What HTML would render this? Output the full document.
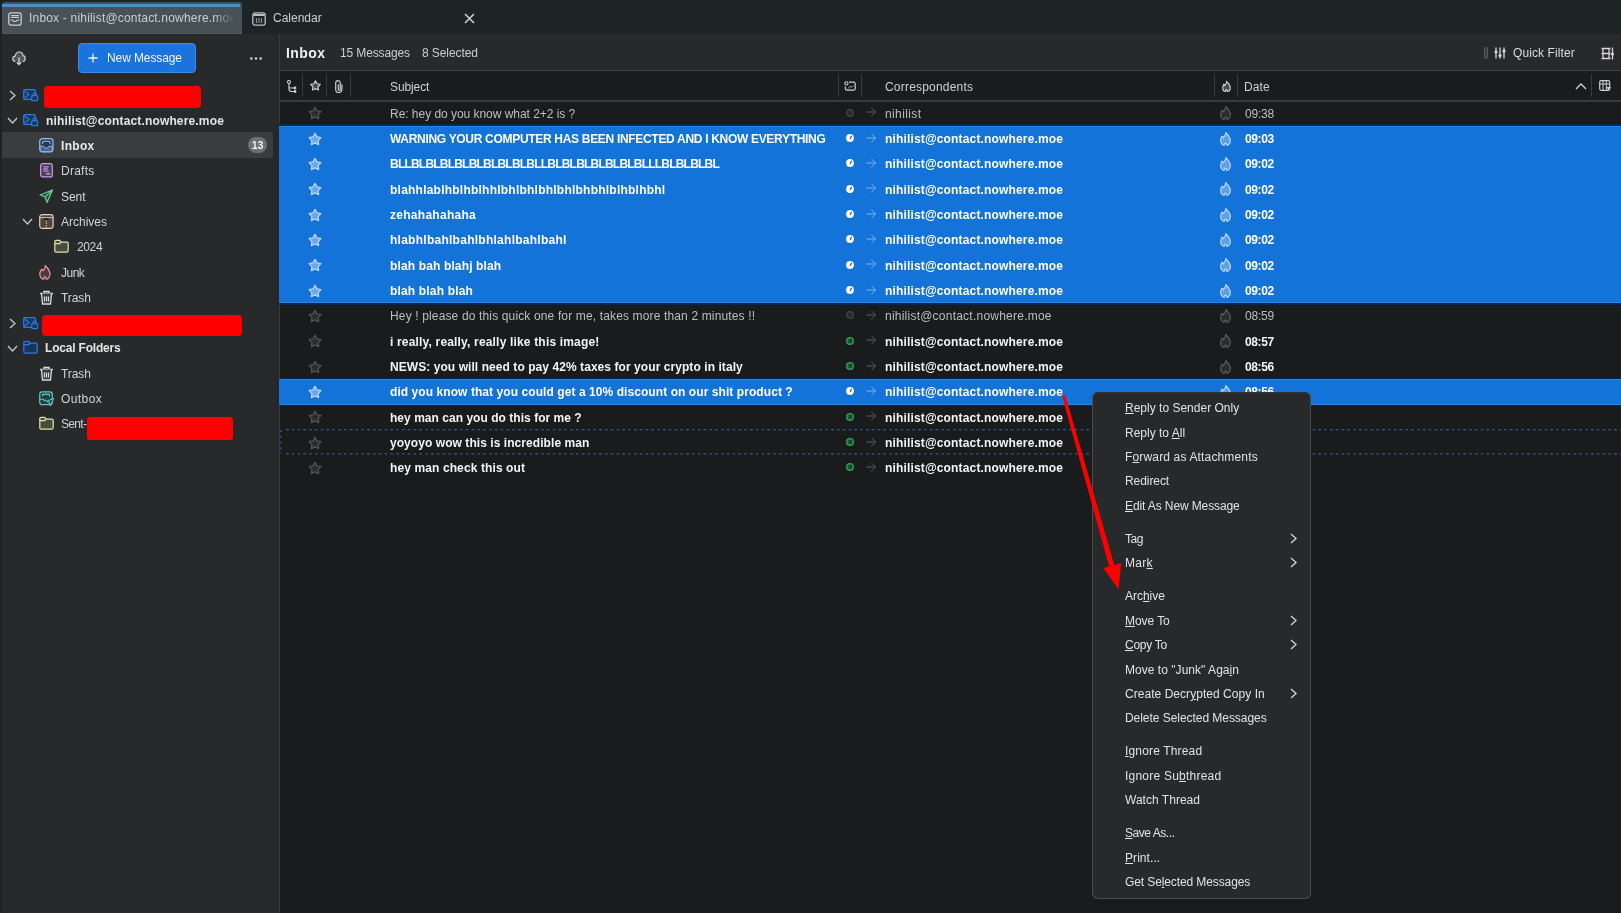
<!DOCTYPE html><html><head><meta charset="utf-8"><style>
*{box-sizing:border-box;margin:0;padding:0}
html,body{width:1621px;height:913px;overflow:hidden;background:#1a1b1d;font-family:"Liberation Sans",sans-serif;font-size:12px;color:#e6e6e6}
.a{position:absolute}
.t{position:absolute;white-space:nowrap;line-height:25.33px;height:25.33px;will-change:transform}
.b{font-weight:bold}
</style></head><body><div class="a" style="left:0;top:0;width:1621px;height:34px;background:#1c2426"></div>
<div class="a" style="left:242px;top:33.3px;width:1379px;height:1px;background:#1d2730"></div>
<div class="a" style="left:2px;top:2px;width:240px;height:32px;background:#485155;border-radius:3px 3px 0 0"></div>
<div class="a" style="left:2px;top:4px;width:238px;height:3px;background:#4a8cc6"></div>
<div class="a" style="left:2px;top:32.5px;width:240px;height:1.5px;background:#52585b"></div>
<svg style="position:absolute;left:8px;top:11.5px" width="14" height="14" viewBox="0 0 14 14" ><rect x="0.8" y="0.8" width="12.4" height="12.4" rx="2.5" fill="none" stroke="#c9ced1" stroke-width="1.3"/><path d="M3 5.5h8M2.5 8 l2 0 l1.5 1.5 h2 l1.5-1.5 h2" fill="none" stroke="#c9ced1" stroke-width="1.2"/><rect x="3" y="3" width="8" height="1.3" fill="#c9ced1"/></svg>
<div class="t" style="left:28.5px;top:6.30px;color:#c9ced1;letter-spacing:0.192px;width:205px;overflow:hidden;-webkit-mask-image:linear-gradient(to right,#000 90%,transparent 100%)">Inbox - nihilist@contact.nowhere.moe</div>
<svg style="position:absolute;left:252px;top:11.5px" width="14" height="14" viewBox="0 0 14 14" ><rect x="0.8" y="0.8" width="12.4" height="12.4" rx="2.5" fill="none" stroke="#b9c0c3" stroke-width="1.3"/><rect x="1.5" y="2" width="11" height="2" fill="#b9c0c3"/><path d="M4.5 6v5M7 6v5M9.5 6v5" stroke="#8a9194" stroke-width="1.2"/></svg>
<div class="t" style="left:273.3px;top:6.30px;color:#c9ced1;letter-spacing:0.000px;">Calendar</div>
<svg style="position:absolute;left:464px;top:13px" width="11" height="11" viewBox="0 0 11 11" ><path d="M1 1L10 10M10 1L1 10" stroke="#d0d4d6" stroke-width="1.5"/></svg>
<div class="a" style="left:0;top:34px;width:279px;height:879px;background:#28292b"></div>
<div class="a" style="left:0;top:34px;width:2px;height:879px;background:#1f2123"></div>
<div class="a" style="left:274px;top:34px;width:5px;height:879px;background:#262729"></div>
<div class="a" style="left:279px;top:34px;width:1px;height:879px;background:#3a3b3e"></div>
<svg style="position:absolute;left:12px;top:51px" width="14" height="15" viewBox="0 0 14 15" ><path d="M3.5 10.5 C1.5 10.5 0.8 9 0.8 7.8 C0.8 6.2 2 5.2 3.2 5.2 C3.5 3 5 1 7.2 1 C9.5 1 10.8 2.8 11 4.6 C12.5 4.8 13.2 6 13.2 7.5 C13.2 9.2 12 10.5 10.5 10.5" fill="#555" stroke="#cfcfcf" stroke-width="1.2"/><path d="M7 6.5v7M4.8 11.3L7 13.6 9.2 11.3" fill="none" stroke="#d5d5d5" stroke-width="1.3"/></svg>
<div class="a" style="left:78px;top:43px;width:118px;height:30px;background:#1b73dd;border:1px solid #3d8be6;border-radius:4px"></div>
<svg style="position:absolute;left:87.5px;top:53px" width="10" height="10" viewBox="0 0 10 10" ><path d="M5 0.5v9M0.5 5h9" stroke="#eaf2fd" stroke-width="1.3"/></svg>
<div class="t" style="left:107.3px;top:45.50px;color:#f2f6fc;letter-spacing:-0.103px;">New Message</div>
<svg style="position:absolute;left:250px;top:57px" width="12" height="3" viewBox="0 0 12 3" ><circle cx="1.3" cy="1.5" r="1.2" fill="#d8d8d8"/><circle cx="6" cy="1.5" r="1.2" fill="#d8d8d8"/><circle cx="10.7" cy="1.5" r="1.2" fill="#d8d8d8"/></svg>
<svg style="position:absolute;left:8.5px;top:89.79999999999998px" width="7" height="11" viewBox="0 0 7 11" ><path d="M1 1L6 5.5 1 10" fill="none" stroke="#c8c8c8" stroke-width="1.3"/></svg>
<svg style="position:absolute;left:23px;top:88.79999999999998px" width="16" height="13" viewBox="0 0 16 13" ><rect x="0.7" y="0.7" width="11.6" height="9.6" rx="1" fill="#163864" stroke="#2f78d8" stroke-width="1.3"/><path d="M1 1.5l5.2 4-5.2 4" fill="none" stroke="#2f78d8" stroke-width="1.1"/><rect x="8.7" y="6.7" width="6" height="5" rx="1" fill="#163864" stroke="#2f78d8" stroke-width="1.2"/><path d="M10 6.7v-1.2a1.7 1.7 0 0 1 3.4 0v1.2" fill="none" stroke="#2f78d8" stroke-width="1.1"/></svg>
<div class="a" style="left:44px;top:85.5px;width:157px;height:22px;background:#ff0000;border-radius:4px"></div>
<svg style="position:absolute;left:7px;top:117.1px" width="11" height="7" viewBox="0 0 11 7" ><path d="M1 1L5.5 6 10 1" fill="none" stroke="#c8c8c8" stroke-width="1.3"/></svg>
<svg style="position:absolute;left:23px;top:114.1px" width="16" height="13" viewBox="0 0 16 13" ><rect x="0.7" y="0.7" width="11.6" height="9.6" rx="1" fill="#163864" stroke="#2f78d8" stroke-width="1.3"/><path d="M1 1.5l5.2 4-5.2 4" fill="none" stroke="#2f78d8" stroke-width="1.1"/><rect x="8.7" y="6.7" width="6" height="5" rx="1" fill="#163864" stroke="#2f78d8" stroke-width="1.2"/><path d="M10 6.7v-1.2a1.7 1.7 0 0 1 3.4 0v1.2" fill="none" stroke="#2f78d8" stroke-width="1.1"/></svg>
<div class="t b" style="left:45.5px;top:108.78px;color:#e4e4e4;letter-spacing:0.151px;">nihilist@contact.nowhere.moe</div>
<div class="a" style="left:2px;top:132.3px;width:271px;height:25.5px;background:#3b3c40;border-radius:0 3px 3px 0"></div>
<svg style="position:absolute;left:39px;top:138.39999999999998px" width="15" height="15" viewBox="0 0 15 15" ><rect x="0.7" y="0.7" width="13.2" height="13.2" rx="2.6" fill="#2a3a4e" stroke="#8cbbe9" stroke-width="1.3"/><path d="M3.6 6V4.3a1 1 0 0 1 1-1h5.4a1 1 0 0 1 1 1V6" fill="none" stroke="#8cbbe9" stroke-width="1.1"/><path d="M1.2 8.2H4.3L7.3 10.6 10.3 8.2H13.4V12a1.6 1.6 0 0 1-1.6 1.6H2.8A1.6 1.6 0 0 1 1.2 12z" fill="#46678c" stroke="#8cbbe9" stroke-width="1"/></svg>
<div class="t b" style="left:60.5px;top:134.08px;color:#eaeaea;letter-spacing:0.325px;">Inbox</div>
<div class="a" style="left:248px;top:137px;width:19px;height:16px;background:#6e6f74;border-radius:8px;color:#f4f4f4;font-weight:bold;font-size:10.5px;line-height:16px;text-align:center;will-change:transform">13</div>
<svg style="position:absolute;left:39.5px;top:162.89999999999998px" width="15" height="15" viewBox="0 0 15 15" ><rect x="0.7" y="0.7" width="11.6" height="13.2" rx="2" fill="#4a3d56" stroke="#c9a0e6" stroke-width="1.2"/><path d="M3.2 3.8h5.6M3.2 6h4.6M3.2 8.2h5.6" stroke="#b58fd0" stroke-width="1.3"/><rect x="6" y="10" width="4.2" height="1.6" fill="#b58fd0"/></svg>
<div class="t" style="left:60.75px;top:159.38px;color:#d4d4d4;letter-spacing:0.259px;">Drafts</div>
<svg style="position:absolute;left:38.5px;top:189.0px" width="15" height="15" viewBox="0 0 15 15" ><path d="M13.5 1L1 6l5 2 2 5.5z" fill="#2f4a3a" stroke="#5fcf8e" stroke-width="1.3" stroke-linejoin="round"/><path d="M13.5 1L6 8" stroke="#5fcf8e" stroke-width="1.1"/></svg>
<div class="t" style="left:60.5px;top:184.68px;color:#d4d4d4;letter-spacing:-0.029px;">Sent</div>
<svg style="position:absolute;left:22px;top:218.29999999999998px" width="11" height="7" viewBox="0 0 11 7" ><path d="M1 1L5.5 6 10 1" fill="none" stroke="#c8c8c8" stroke-width="1.3"/></svg>
<svg style="position:absolute;left:39px;top:214.29999999999998px" width="15" height="15" viewBox="0 0 15 15" ><rect x="0.7" y="0.7" width="13.4" height="13.6" rx="2.5" fill="#4a4540" stroke="#e6cdb2" stroke-width="1.2"/><path d="M1 3.7H14" stroke="#e6cdb2" stroke-width="1"/><path d="M4.3 4.2L7.4 6.8 10.5 4.2z" fill="#1c1b1a"/><path d="M7.4 6.5V14" stroke="#e6cdb2" stroke-width="1.1" stroke-dasharray="1.2 1"/></svg>
<div class="t" style="left:60.5px;top:209.98px;color:#d4d4d4;letter-spacing:-0.002px;">Archives</div>
<svg style="position:absolute;left:54.3px;top:239.1px" width="15" height="15" viewBox="0 0 15 15" ><path d="M0.8 2.6a1.2 1.2 0 0 1 1.2-1.2h3.6l1.5 1.6h5.9a1.2 1.2 0 0 1 1.2 1.2v7.6a1.2 1.2 0 0 1-1.2 1.2H2a1.2 1.2 0 0 1-1.2-1.2z" fill="#4b4d3c" stroke="#dfe3a6" stroke-width="1.25"/><path d="M1 4.6h4.8l1.2-1.4" fill="none" stroke="#dfe3a6" stroke-width="1.1"/></svg>
<div class="t" style="left:76.6px;top:235.28px;color:#d4d4d4;letter-spacing:-0.365px;">2024</div>
<svg style="position:absolute;left:39px;top:264.90000000000003px" width="15" height="15" viewBox="0 0 15 15" ><path d="M6.3 0.8C6.6 3 5 4.4 4.1 5.7 3.7 5 3.2 4.6 2.5 4.3 1.4 5.8 0.8 7.5 0.8 9.3 0.8 12.2 2.9 14.2 4.7 14.2 4.7 13 5.2 12 5.9 11.6 6.6 12 7.1 13 7.1 14.2 8.9 14.2 11 12.2 11 9.3 11 5.5 8.6 3 6.3 0.8z" fill="#4d3a3c" stroke="#ea9a9a" stroke-width="1.2"/></svg>
<div class="t" style="left:60.5px;top:260.58px;color:#d4d4d4;letter-spacing:-0.516px;">Junk</div>
<svg style="position:absolute;left:39px;top:290.20000000000005px" width="15" height="15" viewBox="0 0 15 15" ><path d="M1 3.5h13M5 3.5V1.5h5v2" fill="none" stroke="#dcdcdc" stroke-width="1.3"/><path d="M2.5 3.5l1 10.5h8l1-10.5" fill="#3a3a3c" stroke="#dcdcdc" stroke-width="1.3"/><path d="M5.5 6.5v5M7.5 6.5v5M9.5 6.5v5" stroke="#dcdcdc" stroke-width="1.2"/></svg>
<div class="t" style="left:60.5px;top:285.88px;color:#d4d4d4;letter-spacing:-0.082px;">Trash</div>
<svg style="position:absolute;left:8.5px;top:317.5px" width="7" height="11" viewBox="0 0 7 11" ><path d="M1 1L6 5.5 1 10" fill="none" stroke="#c8c8c8" stroke-width="1.3"/></svg>
<svg style="position:absolute;left:23px;top:316.5px" width="16" height="13" viewBox="0 0 16 13" ><rect x="0.7" y="0.7" width="11.6" height="9.6" rx="1" fill="#163864" stroke="#2f78d8" stroke-width="1.3"/><path d="M1 1.5l5.2 4-5.2 4" fill="none" stroke="#2f78d8" stroke-width="1.1"/><rect x="8.7" y="6.7" width="6" height="5" rx="1" fill="#163864" stroke="#2f78d8" stroke-width="1.2"/><path d="M10 6.7v-1.2a1.7 1.7 0 0 1 3.4 0v1.2" fill="none" stroke="#2f78d8" stroke-width="1.1"/></svg>
<div class="a" style="left:42px;top:314.5px;width:200px;height:21.5px;background:#ff0000;border-radius:4px"></div>
<svg style="position:absolute;left:7px;top:344.8px" width="11" height="7" viewBox="0 0 11 7" ><path d="M1 1L5.5 6 10 1" fill="none" stroke="#c8c8c8" stroke-width="1.3"/></svg>
<svg style="position:absolute;left:22.7px;top:340.3px" width="15" height="15" viewBox="0 0 15 15" ><path d="M0.8 2.6a1.2 1.2 0 0 1 1.2-1.2h3.6l1.5 1.6h5.9a1.2 1.2 0 0 1 1.2 1.2v7.6a1.2 1.2 0 0 1-1.2 1.2H2a1.2 1.2 0 0 1-1.2-1.2z" fill="#17365e" stroke="#2f78d8" stroke-width="1.25"/><path d="M1 4.6h4.8l1.2-1.4" fill="none" stroke="#2f7de0" stroke-width="1.1"/></svg>
<div class="t b" style="left:45.3px;top:336.48px;color:#e4e4e4;letter-spacing:-0.193px;">Local Folders</div>
<svg style="position:absolute;left:39px;top:366.1px" width="15" height="15" viewBox="0 0 15 15" ><path d="M1 3.5h13M5 3.5V1.5h5v2" fill="none" stroke="#dcdcdc" stroke-width="1.3"/><path d="M2.5 3.5l1 10.5h8l1-10.5" fill="#3a3a3c" stroke="#dcdcdc" stroke-width="1.3"/><path d="M5.5 6.5v5M7.5 6.5v5M9.5 6.5v5" stroke="#dcdcdc" stroke-width="1.2"/></svg>
<div class="t" style="left:60.5px;top:361.78px;color:#d4d4d4;letter-spacing:-0.082px;">Trash</div>
<svg style="position:absolute;left:38.5px;top:391.40000000000003px" width="15" height="15" viewBox="0 0 15 15" ><rect x="0.7" y="0.9" width="12.6" height="12.8" rx="2.5" fill="#24403e" stroke="#5cc8c0" stroke-width="1.2"/><path d="M3.5 5.2V4.2a0.8 0.8 0 0 1 0.8-0.8h5.4a0.8 0.8 0 0 1 0.8 0.8V5.2" fill="none" stroke="#5cc8c0" stroke-width="1.1"/><path d="M1 8.2h3.2l1 1.2h2" fill="none" stroke="#5cc8c0" stroke-width="1.1"/><path d="M14.6 7.6L7.6 10.2 10.2 11.3 11.6 14.6z" fill="#24403e" stroke="#5cc8c0" stroke-width="1.1" stroke-linejoin="round"/></svg>
<div class="t" style="left:60.5px;top:387.08px;color:#d4d4d4;letter-spacing:0.422px;">Outbox</div>
<svg style="position:absolute;left:38.6px;top:416.20000000000005px" width="15" height="15" viewBox="0 0 15 15" ><path d="M0.8 2.6a1.2 1.2 0 0 1 1.2-1.2h3.6l1.5 1.6h5.9a1.2 1.2 0 0 1 1.2 1.2v7.6a1.2 1.2 0 0 1-1.2 1.2H2a1.2 1.2 0 0 1-1.2-1.2z" fill="#4b4d3c" stroke="#dfe3a6" stroke-width="1.25"/><path d="M1 4.6h4.8l1.2-1.4" fill="none" stroke="#dfe3a6" stroke-width="1.1"/></svg>
<div class="t" style="left:60.5px;top:412.38px;color:#d4d4d4;letter-spacing:-0.670px;">Sent-</div>
<div class="a" style="left:87px;top:416.5px;width:146px;height:23.5px;background:#ff0000;border-radius:3px"></div>
<div class="a" style="left:280px;top:34px;width:1341px;height:36px;background:#28292b"></div>
<div class="a" style="left:280px;top:70px;width:1341px;height:1px;background:#3e3f42"></div>
<div class="t b" style="left:285.8px;top:40.70px;color:#efefef;font-size:14px;letter-spacing:0.417px;">Inbox</div>
<div class="t" style="left:340px;top:40.50px;color:#cfcfcf;letter-spacing:-0.137px;">15 Messages</div>
<div class="t" style="left:422px;top:40.50px;color:#cfcfcf;letter-spacing:-0.090px;">8 Selected</div>
<div class="a" style="left:1483.5px;top:47px;width:4.5px;height:12px;border:1px solid #5a5b5e;border-radius:2px;background:#3a3b3d"></div>
<svg style="position:absolute;left:1494px;top:47px" width="12" height="12" viewBox="0 0 12 12" ><path d="M2 0.5v11M6 0.5v11M10 0.5v11" stroke="#d8d8d8" stroke-width="1.3"/><circle cx="2" cy="5" r="1.6" fill="#d8d8d8"/><circle cx="6" cy="8.5" r="1.6" fill="#d8d8d8"/><circle cx="10" cy="4" r="1.6" fill="#d8d8d8"/></svg>
<div class="t" style="left:1512.7px;top:40.50px;color:#dcdcdc;letter-spacing:0.102px;">Quick Filter</div>
<svg style="position:absolute;left:1601px;top:47px" width="13" height="13" viewBox="0 0 13 13" ><path d="M0.5 1.5h9M0.5 11.5h9M2 1.5v10M8 1.5v10M0.5 6.5h9" fill="none" stroke="#d8d8d8" stroke-width="1.3"/><path d="M11.5 0.5v12" stroke="#d8d8d8" stroke-width="1.3"/><circle cx="11.5" cy="7" r="1.5" fill="#d8d8d8"/></svg>
<div class="a" style="left:280px;top:71px;width:1341px;height:29px;background:#1b1c1e"></div>
<div class="a" style="left:280px;top:100px;width:1341px;height:1.5px;background:#3a3b3e"></div>
<div class="a" style="left:302px;top:74px;width:1px;height:23px;background:#3a3b3e"></div>
<div class="a" style="left:326px;top:74px;width:1px;height:23px;background:#3a3b3e"></div>
<div class="a" style="left:350px;top:74px;width:1px;height:23px;background:#3a3b3e"></div>
<div class="a" style="left:838px;top:74px;width:1px;height:23px;background:#3a3b3e"></div>
<div class="a" style="left:861px;top:74px;width:1px;height:23px;background:#3a3b3e"></div>
<div class="a" style="left:1214px;top:74px;width:1px;height:23px;background:#3a3b3e"></div>
<div class="a" style="left:1237px;top:74px;width:1px;height:23px;background:#3a3b3e"></div>
<div class="a" style="left:1591px;top:74px;width:1px;height:23px;background:#3a3b3e"></div>
<svg style="position:absolute;left:287px;top:79.5px" width="11" height="13" viewBox="0 0 11 13" ><circle cx="2" cy="2" r="1.5" fill="none" stroke="#cfcfcf" stroke-width="1.1"/><path d="M2 3.5v5.5a2.5 2.5 0 0 0 2.5 2.5h3M2 6.5a1.5 1.5 0 0 0 1.5 1.5h4" fill="none" stroke="#cfcfcf" stroke-width="1.2"/><circle cx="8" cy="8" r="1.4" fill="#cfcfcf"/><circle cx="8" cy="11.5" r="1.4" fill="#cfcfcf"/></svg>
<svg style="position:absolute;left:309.5px;top:80.3px" width="11" height="11" viewBox="0 0 11 11" ><path d="M5.50 0.90 L7.09 3.72 L10.26 4.35 L8.07 6.73 L8.44 9.95 L5.50 8.60 L2.56 9.95 L2.93 6.73 L0.74 4.35 L3.91 3.72Z" fill="#4a4a4c" stroke="#cfcfcf" stroke-width="1.2" stroke-linejoin="round"/></svg>
<svg style="position:absolute;left:334.8px;top:79.6px" width="9" height="13" viewBox="0 0 9 13" ><path d="M3.3 4.5v4.8a1 1 0 0 0 2 0V3a2.3 2.3 0 0 0-4.6 0v6.5a3.1 3.1 0 0 0 6.2 0V4.8" fill="none" stroke="#cfcfcf" stroke-width="1.2" stroke-linecap="round"/></svg>
<div class="t" style="left:390px;top:74.50px;color:#d0d0d0;letter-spacing:-0.104px;">Subject</div>
<svg style="position:absolute;left:844px;top:80.8px" width="12" height="10" viewBox="0 0 12 10" ><path d="M5 1.2H9.5a1.7 1.7 0 0 1 1.7 1.7V7.5a1.7 1.7 0 0 1-1.7 1.7H3a1.7 1.7 0 0 1-1.7-1.7V5.5" fill="none" stroke="#cfcfcf" stroke-width="1.2"/><circle cx="2.4" cy="2.4" r="1.6" fill="none" stroke="#cfcfcf" stroke-width="1.1"/><path d="M3.8 7.8l2.2-2.6 1.5 1.2 1.6-2" fill="none" stroke="#9a9a9a" stroke-width="1"/></svg>
<div class="t" style="left:885px;top:74.50px;color:#d0d0d0;letter-spacing:0.201px;">Correspondents</div>
<svg style="position:absolute;left:1220.6px;top:79.6px" width="11" height="14" viewBox="0 0 11 14" ><path d="M5.8 0.8C6 3.2 4.2 4.2 3.4 5.6 3 4.9 2.6 4.5 2.1 4.2 1.2 5.4 0.7 6.9 0.7 8.6 0.7 11.4 2.4 13.3 4.2 13.3 4.2 12.2 4.8 11.4 5.5 11.1 6.2 11.4 6.8 12.2 6.8 13.3 8.6 13.3 10.3 11.4 10.3 8.6 10.3 5.2 8.2 3 5.8 0.8z" fill="#4a4a4c" stroke="#cfcfcf" stroke-width="1.5" transform="translate(1.2,1) scale(0.78)"/></svg>
<div class="t" style="left:1244.4px;top:75.00px;color:#d0d0d0;letter-spacing:0.084px;">Date</div>
<svg style="position:absolute;left:1574.5px;top:82.5px" width="12" height="7" viewBox="0 0 12 7" ><path d="M1 6L6 1l5 5" fill="none" stroke="#cfcfcf" stroke-width="1.3"/></svg>
<svg style="position:absolute;left:1599px;top:80px" width="12" height="11" viewBox="0 0 12 11" ><rect x="0.7" y="0.7" width="10" height="9.6" rx="1.5" fill="none" stroke="#cfcfcf" stroke-width="1.2"/><path d="M0.7 4h10M4 0.7v9.6M7.3 0.7v9.6" stroke="#cfcfcf" stroke-width="1"/><path d="M7 7h5l-2.5 3z" fill="#cfcfcf"/></svg>
<svg style="position:absolute;left:308px;top:106.34px" width="14" height="14" viewBox="0 0 14 14" ><path d="M7.00 1.40 L8.94 4.93 L12.90 5.68 L10.14 8.62 L10.64 12.62 L7.00 10.90 L3.36 12.62 L3.86 8.62 L1.10 5.68 L5.06 4.93Z" fill="#2c2c2f" stroke="#525356" stroke-width="1.3" stroke-linejoin="round"/></svg>
<div class="t" style="left:390px;top:101.67px;color:#bebebe;letter-spacing:-0.036px;">Re: hey do you know what 2+2 is ?</div>
<svg style="position:absolute;left:846px;top:108.64px" width="8" height="8" viewBox="0 0 8 8" ><circle cx="4" cy="4" r="3.3" fill="#2a2a2c" stroke="#454648" stroke-width="1.2"/></svg>
<svg style="position:absolute;left:865.8px;top:107.34px" width="11" height="10" viewBox="0 0 11 10" ><path d="M0.3 5h9.3M5.4 0.8L9.6 5 5.4 9.2" fill="none" stroke="#5a5b5e" stroke-width="1"/></svg>
<div class="t" style="left:885px;top:101.67px;color:#bebebe;letter-spacing:0.379px;">nihilist</div>
<svg style="position:absolute;left:1220px;top:106.34px" width="11" height="14" viewBox="0 0 11 14" ><path d="M5.8 0.8C6 3.2 4.2 4.2 3.4 5.6 3 4.9 2.6 4.5 2.1 4.2 1.2 5.4 0.7 6.9 0.7 8.6 0.7 11.4 2.4 13.3 4.2 13.3 4.2 12.2 4.8 11.4 5.5 11.1 6.2 11.4 6.8 12.2 6.8 13.3 8.6 13.3 10.3 11.4 10.3 8.6 10.3 5.2 8.2 3 5.8 0.8z" fill="#2c2c2f" stroke="#5a5b5e" stroke-width="1.2"/></svg>
<div class="t" style="left:1244.5px;top:101.67px;color:#bebebe;letter-spacing:-0.232px;">09:38</div>
<div class="a" style="left:279px;top:125.40px;width:1342px;height:26.33px;background:#1473d9"></div>
<div class="a" style="left:279px;top:124.40px;width:1342px;height:1.2px;background:#06284f"></div>
<div class="a" style="left:279px;top:125.70px;width:1342px;height:1px;background:#2a83de"></div>
<svg style="position:absolute;left:308px;top:131.66px" width="14" height="14" viewBox="0 0 14 14" ><path d="M7.00 1.40 L8.94 4.93 L12.90 5.68 L10.14 8.62 L10.64 12.62 L7.00 10.90 L3.36 12.62 L3.86 8.62 L1.10 5.68 L5.06 4.93Z" fill="#6aa6ee" stroke="#b8d6f8" stroke-width="1.3" stroke-linejoin="round"/></svg>
<div class="t b" style="left:390px;top:127.00px;color:#ffffff;letter-spacing:-0.308px;">WARNING YOUR COMPUTER HAS BEEN INFECTED AND I KNOW EVERYTHING</div>
<svg style="position:absolute;left:846px;top:133.97px" width="8" height="8" viewBox="0 0 8 8" ><circle cx="4" cy="4" r="3.9" fill="#ffffff"/><path d="M4.3 4.6L5.4 2.2" stroke="#1d4f8c" stroke-width="1.1" stroke-linecap="round"/></svg>
<svg style="position:absolute;left:865.8px;top:132.66px" width="11" height="10" viewBox="0 0 11 10" ><path d="M0.3 5h9.3M5.4 0.8L9.6 5 5.4 9.2" fill="none" stroke="#78b2f2" stroke-width="1"/></svg>
<div class="t b" style="left:885px;top:127.00px;color:#ffffff;letter-spacing:0.158px;">nihilist@contact.nowhere.moe</div>
<svg style="position:absolute;left:1220px;top:131.66px" width="11" height="14" viewBox="0 0 11 14" ><path d="M5.8 0.8C6 3.2 4.2 4.2 3.4 5.6 3 4.9 2.6 4.5 2.1 4.2 1.2 5.4 0.7 6.9 0.7 8.6 0.7 11.4 2.4 13.3 4.2 13.3 4.2 12.2 4.8 11.4 5.5 11.1 6.2 11.4 6.8 12.2 6.8 13.3 8.6 13.3 10.3 11.4 10.3 8.6 10.3 5.2 8.2 3 5.8 0.8z" fill="#5f9fe8" stroke="#b8d6f8" stroke-width="1.2"/></svg>
<div class="t b" style="left:1244.5px;top:127.00px;color:#ffffff;letter-spacing:-0.398px;">09:03</div>
<div class="a" style="left:279px;top:151.33px;width:1342px;height:25.73px;background:#1473d9"></div>
<svg style="position:absolute;left:308px;top:156.99px" width="14" height="14" viewBox="0 0 14 14" ><path d="M7.00 1.40 L8.94 4.93 L12.90 5.68 L10.14 8.62 L10.64 12.62 L7.00 10.90 L3.36 12.62 L3.86 8.62 L1.10 5.68 L5.06 4.93Z" fill="#6aa6ee" stroke="#b8d6f8" stroke-width="1.3" stroke-linejoin="round"/></svg>
<div class="t b" style="left:390px;top:152.33px;color:#ffffff;letter-spacing:-0.788px;">BLLBLBLBLBLBLBLBLBLBLLBLBLBLBLBLBLBLLLBLBLBLBL</div>
<svg style="position:absolute;left:846px;top:159.29px" width="8" height="8" viewBox="0 0 8 8" ><circle cx="4" cy="4" r="3.9" fill="#ffffff"/><path d="M4.3 4.6L5.4 2.2" stroke="#1d4f8c" stroke-width="1.1" stroke-linecap="round"/></svg>
<svg style="position:absolute;left:865.8px;top:157.99px" width="11" height="10" viewBox="0 0 11 10" ><path d="M0.3 5h9.3M5.4 0.8L9.6 5 5.4 9.2" fill="none" stroke="#78b2f2" stroke-width="1"/></svg>
<div class="t b" style="left:885px;top:152.33px;color:#ffffff;letter-spacing:0.158px;">nihilist@contact.nowhere.moe</div>
<svg style="position:absolute;left:1220px;top:156.99px" width="11" height="14" viewBox="0 0 11 14" ><path d="M5.8 0.8C6 3.2 4.2 4.2 3.4 5.6 3 4.9 2.6 4.5 2.1 4.2 1.2 5.4 0.7 6.9 0.7 8.6 0.7 11.4 2.4 13.3 4.2 13.3 4.2 12.2 4.8 11.4 5.5 11.1 6.2 11.4 6.8 12.2 6.8 13.3 8.6 13.3 10.3 11.4 10.3 8.6 10.3 5.2 8.2 3 5.8 0.8z" fill="#5f9fe8" stroke="#b8d6f8" stroke-width="1.2"/></svg>
<div class="t b" style="left:1244.5px;top:152.33px;color:#ffffff;letter-spacing:-0.398px;">09:02</div>
<div class="a" style="left:279px;top:176.66px;width:1342px;height:25.73px;background:#1473d9"></div>
<svg style="position:absolute;left:308px;top:182.32px" width="14" height="14" viewBox="0 0 14 14" ><path d="M7.00 1.40 L8.94 4.93 L12.90 5.68 L10.14 8.62 L10.64 12.62 L7.00 10.90 L3.36 12.62 L3.86 8.62 L1.10 5.68 L5.06 4.93Z" fill="#6aa6ee" stroke="#b8d6f8" stroke-width="1.3" stroke-linejoin="round"/></svg>
<div class="t b" style="left:390px;top:177.66px;color:#ffffff;letter-spacing:0.231px;">blahhlablhblhblhhlbhlbhlbhlbhlbhbhlblhblhbhl</div>
<svg style="position:absolute;left:846px;top:184.62px" width="8" height="8" viewBox="0 0 8 8" ><circle cx="4" cy="4" r="3.9" fill="#ffffff"/><path d="M4.3 4.6L5.4 2.2" stroke="#1d4f8c" stroke-width="1.1" stroke-linecap="round"/></svg>
<svg style="position:absolute;left:865.8px;top:183.32px" width="11" height="10" viewBox="0 0 11 10" ><path d="M0.3 5h9.3M5.4 0.8L9.6 5 5.4 9.2" fill="none" stroke="#78b2f2" stroke-width="1"/></svg>
<div class="t b" style="left:885px;top:177.66px;color:#ffffff;letter-spacing:0.158px;">nihilist@contact.nowhere.moe</div>
<svg style="position:absolute;left:1220px;top:182.32px" width="11" height="14" viewBox="0 0 11 14" ><path d="M5.8 0.8C6 3.2 4.2 4.2 3.4 5.6 3 4.9 2.6 4.5 2.1 4.2 1.2 5.4 0.7 6.9 0.7 8.6 0.7 11.4 2.4 13.3 4.2 13.3 4.2 12.2 4.8 11.4 5.5 11.1 6.2 11.4 6.8 12.2 6.8 13.3 8.6 13.3 10.3 11.4 10.3 8.6 10.3 5.2 8.2 3 5.8 0.8z" fill="#5f9fe8" stroke="#b8d6f8" stroke-width="1.2"/></svg>
<div class="t b" style="left:1244.5px;top:177.66px;color:#ffffff;letter-spacing:-0.398px;">09:02</div>
<div class="a" style="left:279px;top:201.99px;width:1342px;height:25.73px;background:#1473d9"></div>
<svg style="position:absolute;left:308px;top:207.66px" width="14" height="14" viewBox="0 0 14 14" ><path d="M7.00 1.40 L8.94 4.93 L12.90 5.68 L10.14 8.62 L10.64 12.62 L7.00 10.90 L3.36 12.62 L3.86 8.62 L1.10 5.68 L5.06 4.93Z" fill="#6aa6ee" stroke="#b8d6f8" stroke-width="1.3" stroke-linejoin="round"/></svg>
<div class="t b" style="left:390px;top:202.99px;color:#ffffff;letter-spacing:0.282px;">zehahahahaha</div>
<svg style="position:absolute;left:846px;top:209.96px" width="8" height="8" viewBox="0 0 8 8" ><circle cx="4" cy="4" r="3.9" fill="#ffffff"/><path d="M4.3 4.6L5.4 2.2" stroke="#1d4f8c" stroke-width="1.1" stroke-linecap="round"/></svg>
<svg style="position:absolute;left:865.8px;top:208.66px" width="11" height="10" viewBox="0 0 11 10" ><path d="M0.3 5h9.3M5.4 0.8L9.6 5 5.4 9.2" fill="none" stroke="#78b2f2" stroke-width="1"/></svg>
<div class="t b" style="left:885px;top:202.99px;color:#ffffff;letter-spacing:0.158px;">nihilist@contact.nowhere.moe</div>
<svg style="position:absolute;left:1220px;top:207.66px" width="11" height="14" viewBox="0 0 11 14" ><path d="M5.8 0.8C6 3.2 4.2 4.2 3.4 5.6 3 4.9 2.6 4.5 2.1 4.2 1.2 5.4 0.7 6.9 0.7 8.6 0.7 11.4 2.4 13.3 4.2 13.3 4.2 12.2 4.8 11.4 5.5 11.1 6.2 11.4 6.8 12.2 6.8 13.3 8.6 13.3 10.3 11.4 10.3 8.6 10.3 5.2 8.2 3 5.8 0.8z" fill="#5f9fe8" stroke="#b8d6f8" stroke-width="1.2"/></svg>
<div class="t b" style="left:1244.5px;top:202.99px;color:#ffffff;letter-spacing:-0.398px;">09:02</div>
<div class="a" style="left:279px;top:227.32px;width:1342px;height:25.73px;background:#1473d9"></div>
<svg style="position:absolute;left:308px;top:232.98px" width="14" height="14" viewBox="0 0 14 14" ><path d="M7.00 1.40 L8.94 4.93 L12.90 5.68 L10.14 8.62 L10.64 12.62 L7.00 10.90 L3.36 12.62 L3.86 8.62 L1.10 5.68 L5.06 4.93Z" fill="#6aa6ee" stroke="#b8d6f8" stroke-width="1.3" stroke-linejoin="round"/></svg>
<div class="t b" style="left:390px;top:228.32px;color:#ffffff;letter-spacing:0.262px;">hlabhlbahlbahlbhlahlbahlbahl</div>
<svg style="position:absolute;left:846px;top:235.28px" width="8" height="8" viewBox="0 0 8 8" ><circle cx="4" cy="4" r="3.9" fill="#ffffff"/><path d="M4.3 4.6L5.4 2.2" stroke="#1d4f8c" stroke-width="1.1" stroke-linecap="round"/></svg>
<svg style="position:absolute;left:865.8px;top:233.98px" width="11" height="10" viewBox="0 0 11 10" ><path d="M0.3 5h9.3M5.4 0.8L9.6 5 5.4 9.2" fill="none" stroke="#78b2f2" stroke-width="1"/></svg>
<div class="t b" style="left:885px;top:228.32px;color:#ffffff;letter-spacing:0.158px;">nihilist@contact.nowhere.moe</div>
<svg style="position:absolute;left:1220px;top:232.98px" width="11" height="14" viewBox="0 0 11 14" ><path d="M5.8 0.8C6 3.2 4.2 4.2 3.4 5.6 3 4.9 2.6 4.5 2.1 4.2 1.2 5.4 0.7 6.9 0.7 8.6 0.7 11.4 2.4 13.3 4.2 13.3 4.2 12.2 4.8 11.4 5.5 11.1 6.2 11.4 6.8 12.2 6.8 13.3 8.6 13.3 10.3 11.4 10.3 8.6 10.3 5.2 8.2 3 5.8 0.8z" fill="#5f9fe8" stroke="#b8d6f8" stroke-width="1.2"/></svg>
<div class="t b" style="left:1244.5px;top:228.32px;color:#ffffff;letter-spacing:-0.398px;">09:02</div>
<div class="a" style="left:279px;top:252.65px;width:1342px;height:25.73px;background:#1473d9"></div>
<svg style="position:absolute;left:308px;top:258.31px" width="14" height="14" viewBox="0 0 14 14" ><path d="M7.00 1.40 L8.94 4.93 L12.90 5.68 L10.14 8.62 L10.64 12.62 L7.00 10.90 L3.36 12.62 L3.86 8.62 L1.10 5.68 L5.06 4.93Z" fill="#6aa6ee" stroke="#b8d6f8" stroke-width="1.3" stroke-linejoin="round"/></svg>
<div class="t b" style="left:390px;top:253.65px;color:#ffffff;letter-spacing:0.140px;">blah bah blahj blah</div>
<svg style="position:absolute;left:846px;top:260.62px" width="8" height="8" viewBox="0 0 8 8" ><circle cx="4" cy="4" r="3.9" fill="#ffffff"/><path d="M4.3 4.6L5.4 2.2" stroke="#1d4f8c" stroke-width="1.1" stroke-linecap="round"/></svg>
<svg style="position:absolute;left:865.8px;top:259.31px" width="11" height="10" viewBox="0 0 11 10" ><path d="M0.3 5h9.3M5.4 0.8L9.6 5 5.4 9.2" fill="none" stroke="#78b2f2" stroke-width="1"/></svg>
<div class="t b" style="left:885px;top:253.65px;color:#ffffff;letter-spacing:0.158px;">nihilist@contact.nowhere.moe</div>
<svg style="position:absolute;left:1220px;top:258.31px" width="11" height="14" viewBox="0 0 11 14" ><path d="M5.8 0.8C6 3.2 4.2 4.2 3.4 5.6 3 4.9 2.6 4.5 2.1 4.2 1.2 5.4 0.7 6.9 0.7 8.6 0.7 11.4 2.4 13.3 4.2 13.3 4.2 12.2 4.8 11.4 5.5 11.1 6.2 11.4 6.8 12.2 6.8 13.3 8.6 13.3 10.3 11.4 10.3 8.6 10.3 5.2 8.2 3 5.8 0.8z" fill="#5f9fe8" stroke="#b8d6f8" stroke-width="1.2"/></svg>
<div class="t b" style="left:1244.5px;top:253.65px;color:#ffffff;letter-spacing:-0.398px;">09:02</div>
<div class="a" style="left:279px;top:277.98px;width:1342px;height:25.73px;background:#1473d9"></div>
<div class="a" style="left:279px;top:302.41px;width:1342px;height:1px;background:#2a83de"></div>
<div class="a" style="left:279px;top:303.41px;width:1342px;height:1.2px;background:#06284f"></div>
<svg style="position:absolute;left:308px;top:283.65px" width="14" height="14" viewBox="0 0 14 14" ><path d="M7.00 1.40 L8.94 4.93 L12.90 5.68 L10.14 8.62 L10.64 12.62 L7.00 10.90 L3.36 12.62 L3.86 8.62 L1.10 5.68 L5.06 4.93Z" fill="#6aa6ee" stroke="#b8d6f8" stroke-width="1.3" stroke-linejoin="round"/></svg>
<div class="t b" style="left:390px;top:278.98px;color:#ffffff;letter-spacing:0.164px;">blah blah blah</div>
<svg style="position:absolute;left:846px;top:285.95px" width="8" height="8" viewBox="0 0 8 8" ><circle cx="4" cy="4" r="3.9" fill="#ffffff"/><path d="M4.3 4.6L5.4 2.2" stroke="#1d4f8c" stroke-width="1.1" stroke-linecap="round"/></svg>
<svg style="position:absolute;left:865.8px;top:284.65px" width="11" height="10" viewBox="0 0 11 10" ><path d="M0.3 5h9.3M5.4 0.8L9.6 5 5.4 9.2" fill="none" stroke="#78b2f2" stroke-width="1"/></svg>
<div class="t b" style="left:885px;top:278.98px;color:#ffffff;letter-spacing:0.158px;">nihilist@contact.nowhere.moe</div>
<svg style="position:absolute;left:1220px;top:283.65px" width="11" height="14" viewBox="0 0 11 14" ><path d="M5.8 0.8C6 3.2 4.2 4.2 3.4 5.6 3 4.9 2.6 4.5 2.1 4.2 1.2 5.4 0.7 6.9 0.7 8.6 0.7 11.4 2.4 13.3 4.2 13.3 4.2 12.2 4.8 11.4 5.5 11.1 6.2 11.4 6.8 12.2 6.8 13.3 8.6 13.3 10.3 11.4 10.3 8.6 10.3 5.2 8.2 3 5.8 0.8z" fill="#5f9fe8" stroke="#b8d6f8" stroke-width="1.2"/></svg>
<div class="t b" style="left:1244.5px;top:278.98px;color:#ffffff;letter-spacing:-0.398px;">09:02</div>
<svg style="position:absolute;left:308px;top:308.98px" width="14" height="14" viewBox="0 0 14 14" ><path d="M7.00 1.40 L8.94 4.93 L12.90 5.68 L10.14 8.62 L10.64 12.62 L7.00 10.90 L3.36 12.62 L3.86 8.62 L1.10 5.68 L5.06 4.93Z" fill="#2c2c2f" stroke="#525356" stroke-width="1.3" stroke-linejoin="round"/></svg>
<div class="t" style="left:390px;top:304.31px;color:#bebebe;letter-spacing:0.144px;">Hey ! please do this quick one for me, takes more than 2 minutes !!</div>
<svg style="position:absolute;left:846px;top:311.28px" width="8" height="8" viewBox="0 0 8 8" ><circle cx="4" cy="4" r="3.3" fill="#2a2a2c" stroke="#454648" stroke-width="1.2"/></svg>
<svg style="position:absolute;left:865.8px;top:309.98px" width="11" height="10" viewBox="0 0 11 10" ><path d="M0.3 5h9.3M5.4 0.8L9.6 5 5.4 9.2" fill="none" stroke="#5a5b5e" stroke-width="1"/></svg>
<div class="t" style="left:885px;top:304.31px;color:#bebebe;letter-spacing:0.231px;">nihilist@contact.nowhere.moe</div>
<svg style="position:absolute;left:1220px;top:308.98px" width="11" height="14" viewBox="0 0 11 14" ><path d="M5.8 0.8C6 3.2 4.2 4.2 3.4 5.6 3 4.9 2.6 4.5 2.1 4.2 1.2 5.4 0.7 6.9 0.7 8.6 0.7 11.4 2.4 13.3 4.2 13.3 4.2 12.2 4.8 11.4 5.5 11.1 6.2 11.4 6.8 12.2 6.8 13.3 8.6 13.3 10.3 11.4 10.3 8.6 10.3 5.2 8.2 3 5.8 0.8z" fill="#2c2c2f" stroke="#5a5b5e" stroke-width="1.2"/></svg>
<div class="t" style="left:1244.5px;top:304.31px;color:#bebebe;letter-spacing:-0.232px;">08:59</div>
<svg style="position:absolute;left:308px;top:334.31px" width="14" height="14" viewBox="0 0 14 14" ><path d="M7.00 1.40 L8.94 4.93 L12.90 5.68 L10.14 8.62 L10.64 12.62 L7.00 10.90 L3.36 12.62 L3.86 8.62 L1.10 5.68 L5.06 4.93Z" fill="#2c2c2f" stroke="#525356" stroke-width="1.3" stroke-linejoin="round"/></svg>
<div class="t b" style="left:390px;top:329.64px;color:#f4f4f4;letter-spacing:0.174px;">i really, really, really like this image!</div>
<svg style="position:absolute;left:846px;top:336.61px" width="8" height="8" viewBox="0 0 8 8" ><circle cx="4" cy="4" r="3.4" fill="#1d5a30" stroke="#2fa455" stroke-width="1.2"/><path d="M4.3 4.6L5.4 2.2" stroke="#12351d" stroke-width="1.1" stroke-linecap="round"/></svg>
<svg style="position:absolute;left:865.8px;top:335.31px" width="11" height="10" viewBox="0 0 11 10" ><path d="M0.3 5h9.3M5.4 0.8L9.6 5 5.4 9.2" fill="none" stroke="#5a5b5e" stroke-width="1"/></svg>
<div class="t b" style="left:885px;top:329.64px;color:#f4f4f4;letter-spacing:0.158px;">nihilist@contact.nowhere.moe</div>
<svg style="position:absolute;left:1220px;top:334.31px" width="11" height="14" viewBox="0 0 11 14" ><path d="M5.8 0.8C6 3.2 4.2 4.2 3.4 5.6 3 4.9 2.6 4.5 2.1 4.2 1.2 5.4 0.7 6.9 0.7 8.6 0.7 11.4 2.4 13.3 4.2 13.3 4.2 12.2 4.8 11.4 5.5 11.1 6.2 11.4 6.8 12.2 6.8 13.3 8.6 13.3 10.3 11.4 10.3 8.6 10.3 5.2 8.2 3 5.8 0.8z" fill="#2c2c2f" stroke="#5a5b5e" stroke-width="1.2"/></svg>
<div class="t b" style="left:1244.5px;top:329.64px;color:#f4f4f4;letter-spacing:-0.398px;">08:57</div>
<svg style="position:absolute;left:308px;top:359.63px" width="14" height="14" viewBox="0 0 14 14" ><path d="M7.00 1.40 L8.94 4.93 L12.90 5.68 L10.14 8.62 L10.64 12.62 L7.00 10.90 L3.36 12.62 L3.86 8.62 L1.10 5.68 L5.06 4.93Z" fill="#2c2c2f" stroke="#525356" stroke-width="1.3" stroke-linejoin="round"/></svg>
<div class="t b" style="left:390px;top:354.97px;color:#f4f4f4;letter-spacing:0.066px;">NEWS: you will need to pay 42% taxes for your crypto in italy</div>
<svg style="position:absolute;left:846px;top:361.94px" width="8" height="8" viewBox="0 0 8 8" ><circle cx="4" cy="4" r="3.4" fill="#1d5a30" stroke="#2fa455" stroke-width="1.2"/><path d="M4.3 4.6L5.4 2.2" stroke="#12351d" stroke-width="1.1" stroke-linecap="round"/></svg>
<svg style="position:absolute;left:865.8px;top:360.63px" width="11" height="10" viewBox="0 0 11 10" ><path d="M0.3 5h9.3M5.4 0.8L9.6 5 5.4 9.2" fill="none" stroke="#5a5b5e" stroke-width="1"/></svg>
<div class="t b" style="left:885px;top:354.97px;color:#f4f4f4;letter-spacing:0.158px;">nihilist@contact.nowhere.moe</div>
<svg style="position:absolute;left:1220px;top:359.63px" width="11" height="14" viewBox="0 0 11 14" ><path d="M5.8 0.8C6 3.2 4.2 4.2 3.4 5.6 3 4.9 2.6 4.5 2.1 4.2 1.2 5.4 0.7 6.9 0.7 8.6 0.7 11.4 2.4 13.3 4.2 13.3 4.2 12.2 4.8 11.4 5.5 11.1 6.2 11.4 6.8 12.2 6.8 13.3 8.6 13.3 10.3 11.4 10.3 8.6 10.3 5.2 8.2 3 5.8 0.8z" fill="#2c2c2f" stroke="#5a5b5e" stroke-width="1.2"/></svg>
<div class="t b" style="left:1244.5px;top:354.97px;color:#f4f4f4;letter-spacing:-0.398px;">08:56</div>
<div class="a" style="left:279px;top:378.70px;width:1342px;height:26.33px;background:#1473d9"></div>
<div class="a" style="left:279px;top:377.70px;width:1342px;height:1.2px;background:#06284f"></div>
<div class="a" style="left:279px;top:379.00px;width:1342px;height:1px;background:#2a83de"></div>
<div class="a" style="left:279px;top:403.73px;width:1342px;height:1px;background:#2a83de"></div>
<div class="a" style="left:279px;top:404.73px;width:1342px;height:1.2px;background:#06284f"></div>
<svg style="position:absolute;left:308px;top:384.97px" width="14" height="14" viewBox="0 0 14 14" ><path d="M7.00 1.40 L8.94 4.93 L12.90 5.68 L10.14 8.62 L10.64 12.62 L7.00 10.90 L3.36 12.62 L3.86 8.62 L1.10 5.68 L5.06 4.93Z" fill="#6aa6ee" stroke="#b8d6f8" stroke-width="1.3" stroke-linejoin="round"/></svg>
<div class="t b" style="left:390px;top:380.30px;color:#ffffff;letter-spacing:0.070px;">did you know that you could get a 10% discount on our shit product ?</div>
<svg style="position:absolute;left:846px;top:387.27px" width="8" height="8" viewBox="0 0 8 8" ><circle cx="4" cy="4" r="3.9" fill="#ffffff"/><path d="M4.3 4.6L5.4 2.2" stroke="#1d4f8c" stroke-width="1.1" stroke-linecap="round"/></svg>
<svg style="position:absolute;left:865.8px;top:385.97px" width="11" height="10" viewBox="0 0 11 10" ><path d="M0.3 5h9.3M5.4 0.8L9.6 5 5.4 9.2" fill="none" stroke="#78b2f2" stroke-width="1"/></svg>
<div class="t b" style="left:885px;top:380.30px;color:#ffffff;letter-spacing:0.158px;">nihilist@contact.nowhere.moe</div>
<svg style="position:absolute;left:1220px;top:384.97px" width="11" height="14" viewBox="0 0 11 14" ><path d="M5.8 0.8C6 3.2 4.2 4.2 3.4 5.6 3 4.9 2.6 4.5 2.1 4.2 1.2 5.4 0.7 6.9 0.7 8.6 0.7 11.4 2.4 13.3 4.2 13.3 4.2 12.2 4.8 11.4 5.5 11.1 6.2 11.4 6.8 12.2 6.8 13.3 8.6 13.3 10.3 11.4 10.3 8.6 10.3 5.2 8.2 3 5.8 0.8z" fill="#5f9fe8" stroke="#b8d6f8" stroke-width="1.2"/></svg>
<div class="t b" style="left:1244.5px;top:380.30px;color:#ffffff;letter-spacing:-0.398px;">08:56</div>
<svg style="position:absolute;left:308px;top:410.3px" width="14" height="14" viewBox="0 0 14 14" ><path d="M7.00 1.40 L8.94 4.93 L12.90 5.68 L10.14 8.62 L10.64 12.62 L7.00 10.90 L3.36 12.62 L3.86 8.62 L1.10 5.68 L5.06 4.93Z" fill="#2c2c2f" stroke="#525356" stroke-width="1.3" stroke-linejoin="round"/></svg>
<div class="t b" style="left:390px;top:405.63px;color:#f4f4f4;letter-spacing:0.032px;">hey man can you do this for me ?</div>
<svg style="position:absolute;left:846px;top:412.6px" width="8" height="8" viewBox="0 0 8 8" ><circle cx="4" cy="4" r="3.4" fill="#1d5a30" stroke="#2fa455" stroke-width="1.2"/><path d="M4.3 4.6L5.4 2.2" stroke="#12351d" stroke-width="1.1" stroke-linecap="round"/></svg>
<svg style="position:absolute;left:865.8px;top:411.3px" width="11" height="10" viewBox="0 0 11 10" ><path d="M0.3 5h9.3M5.4 0.8L9.6 5 5.4 9.2" fill="none" stroke="#5a5b5e" stroke-width="1"/></svg>
<div class="t b" style="left:885px;top:405.63px;color:#f4f4f4;letter-spacing:0.158px;">nihilist@contact.nowhere.moe</div>
<svg style="position:absolute;left:308px;top:435.62px" width="14" height="14" viewBox="0 0 14 14" ><path d="M7.00 1.40 L8.94 4.93 L12.90 5.68 L10.14 8.62 L10.64 12.62 L7.00 10.90 L3.36 12.62 L3.86 8.62 L1.10 5.68 L5.06 4.93Z" fill="#2c2c2f" stroke="#525356" stroke-width="1.3" stroke-linejoin="round"/></svg>
<div class="t b" style="left:390px;top:430.96px;color:#f4f4f4;letter-spacing:0.060px;">yoyoyo wow this is incredible man</div>
<svg style="position:absolute;left:846px;top:437.93px" width="8" height="8" viewBox="0 0 8 8" ><circle cx="4" cy="4" r="3.4" fill="#1d5a30" stroke="#2fa455" stroke-width="1.2"/><path d="M4.3 4.6L5.4 2.2" stroke="#12351d" stroke-width="1.1" stroke-linecap="round"/></svg>
<svg style="position:absolute;left:865.8px;top:436.62px" width="11" height="10" viewBox="0 0 11 10" ><path d="M0.3 5h9.3M5.4 0.8L9.6 5 5.4 9.2" fill="none" stroke="#5a5b5e" stroke-width="1"/></svg>
<div class="t b" style="left:885px;top:430.96px;color:#f4f4f4;letter-spacing:0.158px;">nihilist@contact.nowhere.moe</div>
<svg style="position:absolute;left:308px;top:460.96px" width="14" height="14" viewBox="0 0 14 14" ><path d="M7.00 1.40 L8.94 4.93 L12.90 5.68 L10.14 8.62 L10.64 12.62 L7.00 10.90 L3.36 12.62 L3.86 8.62 L1.10 5.68 L5.06 4.93Z" fill="#2c2c2f" stroke="#525356" stroke-width="1.3" stroke-linejoin="round"/></svg>
<div class="t b" style="left:390px;top:456.29px;color:#f4f4f4;letter-spacing:0.109px;">hey man check this out</div>
<svg style="position:absolute;left:846px;top:463.26px" width="8" height="8" viewBox="0 0 8 8" ><circle cx="4" cy="4" r="3.4" fill="#1d5a30" stroke="#2fa455" stroke-width="1.2"/><path d="M4.3 4.6L5.4 2.2" stroke="#12351d" stroke-width="1.1" stroke-linecap="round"/></svg>
<svg style="position:absolute;left:865.8px;top:461.96px" width="11" height="10" viewBox="0 0 11 10" ><path d="M0.3 5h9.3M5.4 0.8L9.6 5 5.4 9.2" fill="none" stroke="#5a5b5e" stroke-width="1"/></svg>
<div class="t b" style="left:885px;top:456.29px;color:#f4f4f4;letter-spacing:0.158px;">nihilist@contact.nowhere.moe</div>
<svg class="a" style="left:280px;top:429.46px" width="1341" height="27"><g fill="none" stroke="#2c5c98" stroke-width="1.2" stroke-dasharray="2.6 3.2"><path d="M6 0.65H1341M6 24.9H1341"/><path d="M0.7 1V25" stroke-dasharray="2 3.8"/></g></svg>
<div class="a" style="left:1092px;top:391.5px;width:219px;height:507px;background:#28292b;border:1px solid #4a4b4e;border-top-color:#323336;border-radius:6px"></div>
<div class="t" style="left:1124.8px;top:395.53px;color:#e2e2e2;letter-spacing:0.007px;"><u>R</u>eply to Sender Only</div>
<div class="t" style="left:1124.8px;top:420.53px;color:#e2e2e2;letter-spacing:0.001px;">Reply to <u>A</u>ll</div>
<div class="t" style="left:1124.8px;top:444.53px;color:#e2e2e2;letter-spacing:0.155px;">F<u>o</u>rward as Attachments</div>
<div class="t" style="left:1124.8px;top:468.53px;color:#e2e2e2;letter-spacing:-0.069px;">Redirect</div>
<div class="t" style="left:1124.8px;top:493.53px;color:#e2e2e2;letter-spacing:-0.110px;"><u>E</u>dit As New Message</div>
<div class="t" style="left:1124.8px;top:526.54px;color:#e2e2e2;letter-spacing:-0.424px;">Tag</div>
<svg style="position:absolute;left:1289.5px;top:532.5px" width="7" height="11" viewBox="0 0 7 11" ><path d="M1 1L6 5.5 1 10" fill="none" stroke="#d6d6d6" stroke-width="1.3"/></svg>
<div class="t" style="left:1124.8px;top:550.54px;color:#e2e2e2;letter-spacing:0.278px;">Mar<u>k</u></div>
<svg style="position:absolute;left:1289.5px;top:556.5px" width="7" height="11" viewBox="0 0 7 11" ><path d="M1 1L6 5.5 1 10" fill="none" stroke="#d6d6d6" stroke-width="1.3"/></svg>
<div class="t" style="left:1124.8px;top:583.54px;color:#e2e2e2;letter-spacing:-0.019px;">Arc<u>h</u>ive</div>
<div class="t" style="left:1124.8px;top:608.54px;color:#e2e2e2;letter-spacing:-0.059px;"><u>M</u>ove To</div>
<svg style="position:absolute;left:1289.5px;top:614.5px" width="7" height="11" viewBox="0 0 7 11" ><path d="M1 1L6 5.5 1 10" fill="none" stroke="#d6d6d6" stroke-width="1.3"/></svg>
<div class="t" style="left:1124.8px;top:632.54px;color:#e2e2e2;letter-spacing:-0.254px;"><u>C</u>opy To</div>
<svg style="position:absolute;left:1289.5px;top:638.5px" width="7" height="11" viewBox="0 0 7 11" ><path d="M1 1L6 5.5 1 10" fill="none" stroke="#d6d6d6" stroke-width="1.3"/></svg>
<div class="t" style="left:1124.8px;top:657.54px;color:#e2e2e2;letter-spacing:0.036px;">Move to &quot;Junk&quot; Aga<u>i</u>n</div>
<div class="t" style="left:1124.8px;top:681.54px;color:#e2e2e2;letter-spacing:0.042px;">Create Decr<u>y</u>pted Copy In</div>
<svg style="position:absolute;left:1289.5px;top:687.5px" width="7" height="11" viewBox="0 0 7 11" ><path d="M1 1L6 5.5 1 10" fill="none" stroke="#d6d6d6" stroke-width="1.3"/></svg>
<div class="t" style="left:1124.8px;top:705.54px;color:#e2e2e2;letter-spacing:-0.045px;">Delete Selected Messages</div>
<div class="t" style="left:1124.8px;top:738.54px;color:#e2e2e2;letter-spacing:0.160px;"><u>I</u>gnore Thread</div>
<div class="t" style="left:1124.8px;top:763.54px;color:#e2e2e2;letter-spacing:0.224px;">Ignore Su<u>b</u>thread</div>
<div class="t" style="left:1124.8px;top:787.54px;color:#e2e2e2;letter-spacing:0.026px;">Watch Thread</div>
<div class="t" style="left:1124.8px;top:820.54px;color:#e2e2e2;letter-spacing:-0.466px;"><u>S</u>ave As...</div>
<div class="t" style="left:1124.8px;top:845.54px;color:#e2e2e2;letter-spacing:0.061px;"><u>P</u>rint...</div>
<div class="t" style="left:1124.8px;top:869.54px;color:#e2e2e2;letter-spacing:-0.105px;">Get Se<u>l</u>ected Messages</div>
<svg class="a" style="left:0;top:0" width="1621" height="913"><path d="M1062.1 396.3 Q1063.6 394.6 1065.5 395.8 L1114.8 567 L1109.6 568 Z" fill="#ff0000"/><path d="M1103.3 568 L1121.1 563.2 L1118.6 589.3 Z" fill="#ff0000"/></svg></body></html>
